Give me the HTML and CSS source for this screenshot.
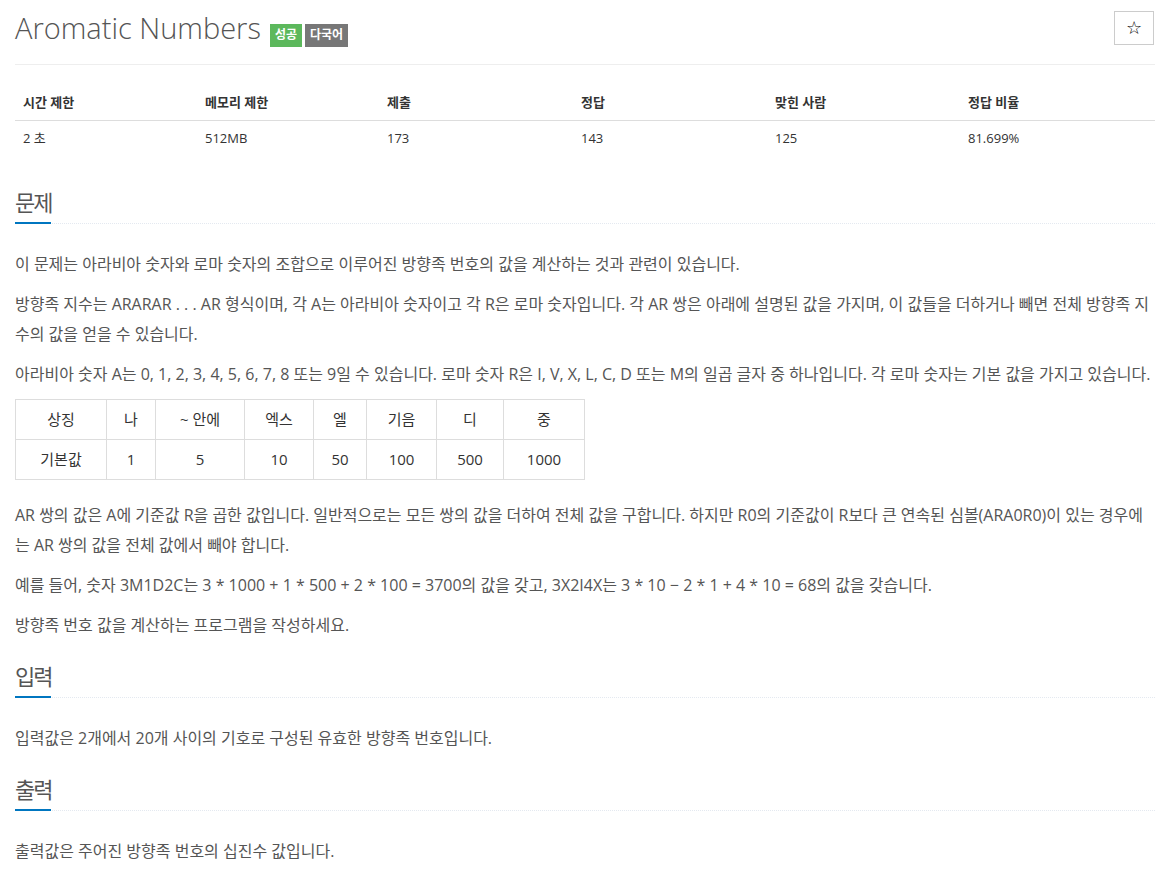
FILE: index.html
```html
<!DOCTYPE html>
<html lang="ko">
<head>
<meta charset="utf-8">
<title>Aromatic Numbers</title>
<link rel="stylesheet" href="styles.css">
</head>
<body>
<div class="container">
  <div class="page-header">
    <h1 class="title"><span class="title-text">Aromatic Numbers</span><span class="label label-success">성공</span><span class="label label-default">다국어</span></h1>
    <button class="star-btn" type="button">☆</button>
  </div>

  <table class="info-table">
    <colgroup>
      <col class="c1"><col class="c2"><col class="c3"><col class="c4"><col class="c5"><col class="c6">
    </colgroup>
    <thead>
      <tr><th>시간 제한</th><th>메모리 제한</th><th>제출</th><th>정답</th><th>맞힌 사람</th><th>정답 비율</th></tr>
    </thead>
    <tbody>
      <tr><td>2 초</td><td>512MB</td><td>173</td><td>143</td><td>125</td><td>81.699%</td></tr>
    </tbody>
  </table>

  <section class="section">
    <div class="headline"><h2>문제</h2></div>
    <div class="problem-text">
      <p>이 문제는 아라비아 숫자와 로마 숫자의 조합으로 이루어진 방향족 번호의 값을 계산하는 것과 관련이 있습니다.</p>
      <p>방향족 지수는 ARARAR . . . AR 형식이며, 각 A는 아라비아 숫자이고 각 R은 로마 숫자입니다. 각 AR 쌍은 아래에 설명된 값을 가지며, 이 값들을 더하거나 빼면 전체 방향족 지수의 값을 얻을 수 있습니다.</p>
      <p>아라비아 숫자 A는 0, 1, 2, 3, 4, 5, 6, 7, 8 또는 9일 수 있습니다. 로마 숫자 R은 I, V, X, L, C, D 또는 M의 일곱 글자 중 하나입니다. 각 로마 숫자는 기본 값을 가지고 있습니다.</p>
      <table class="sym-table">
        <colgroup>
          <col class="s1"><col class="s2"><col class="s3"><col class="s4"><col class="s5"><col class="s6"><col class="s7"><col class="s8">
        </colgroup>
        <tbody>
          <tr><td>상징</td><td>나</td><td>~ 안에</td><td>엑스</td><td>엘</td><td>기음</td><td>디</td><td>중</td></tr>
          <tr><td>기본값</td><td>1</td><td>5</td><td>10</td><td>50</td><td>100</td><td>500</td><td>1000</td></tr>
        </tbody>
      </table>
      <p>AR 쌍의 값은 A에 기준값 R을 곱한 값입니다. 일반적으로는 모든 쌍의 값을 더하여 전체 값을 구합니다. 하지만 R0의 기준값이 R보다 큰 연속된 심볼(ARA0R0)이 있는 경우에는 AR 쌍의 값을 전체 값에서 빼야 합니다.</p>
      <p>예를 들어, 숫자 3M1D2C는 3 * 1000 + 1 * 500 + 2 * 100 = 3700의 값을 갖고, 3X2I4X는 3 * 10 − 2 * 1 + 4 * 10 = 68의 값을 갖습니다.</p>
      <p>방향족 번호 값을 계산하는 프로그램을 작성하세요.</p>
    </div>
  </section>

  <section class="section">
    <div class="headline"><h2>입력</h2></div>
    <div class="problem-text">
      <p>입력값은 2개에서 20개 사이의 기호로 구성된 유효한 방향족 번호입니다.</p>
    </div>
  </section>

  <section class="section">
    <div class="headline"><h2>출력</h2></div>
    <div class="problem-text">
      <p>출력값은 주어진 방향족 번호의 십진수 값입니다.</p>
    </div>
  </section>
</div>
</body>
</html>
```
FILE: styles.css
```css
html, body {
  margin: 0;
  padding: 0;
  background: #fff;
}
body {
  font-family: "Open Sans", "Noto Sans CJK KR", sans-serif;
  color: #555;
}
.container {
  width: 1140px;
  padding: 0 15px;
}
.page-header {
  display: flex;
  justify-content: space-between;
  align-items: flex-start;
  height: 34px;
  padding-top: 11px;
  padding-bottom: 19px;
  border-bottom: 1px solid #eee;
  margin-bottom: 20px;
}
.title {
  margin: 1px 0 0;
  font-size: 29px;
  font-weight: 300;
  line-height: 31px;
  color: #555;
  display: flex;
  align-items: baseline;
}
.label {
  font-size: 12px;
  font-weight: 700;
  line-height: 16px;
  padding: 3px 5px 4px;
  color: #fff;
}
.label-success {
  background: #5cb85c;
  margin-left: 9px;
}
.label-default {
  background: #777;
  margin-left: 3px;
}
.star-btn {
  width: 40px;
  height: 34px;
  box-sizing: border-box;
  border: 1px solid #ccc;
  border-radius: 0;
  background: #fff;
  color: #000;
  font-family: "DejaVu Sans", sans-serif;
  font-size: 18px;
  line-height: 1;
  padding: 0;
  display: flex;
  align-items: center;
  justify-content: center;
  margin-right: 1px;
}
.info-table {
  width: 1140px;
  border-collapse: collapse;
  table-layout: fixed;
  font-size: 13px;
  color: #333;
  margin-bottom: 20px;
}
.info-table .c1, .info-table .c2 { width: 182px; }
.info-table .c3, .info-table .c4 { width: 194px; }
.info-table .c5 { width: 193px; }
.info-table .c6 { width: 195px; }
.info-table th, .info-table td {
  padding: 8px;
  line-height: 19px;
  text-align: left;
}
.info-table th {
  font-weight: 700;
  border-bottom: 1px solid #ddd;
}
.section {
  padding-top: 13px;
}
.headline {
  margin: 0 0 25px;
  border-bottom: 1px dotted #e4e9f0;
}
.headline h2 {
  display: inline-block;
  margin: 0 0 -1px;
  font-size: 22px;
  font-weight: 400;
  line-height: 26px;
  letter-spacing: -2px;
  padding-bottom: 7px;
  border-bottom: 2px solid #0076c0;
  color: #555;
}
.problem-text p {
  margin: 0 0 10px;
  font-size: 16px;
  line-height: 30px;
}
.sym-table {
  width: 569px;
  table-layout: fixed;
  border-collapse: collapse;
  margin-bottom: 20px;
  font-size: 15px;
  color: #333;
}
.sym-table .s1 { width: 91px; }
.sym-table .s2 { width: 49px; }
.sym-table .s3 { width: 89px; }
.sym-table .s4 { width: 69px; }
.sym-table .s5 { width: 53px; }
.sym-table .s6 { width: 70px; }
.sym-table .s7 { width: 67px; }
.sym-table .s8 { width: 81px; }
.sym-table td {
  border: 1px solid #ddd;
  padding: 7px 4px;
  line-height: 25px;
  text-align: center;
}
```
